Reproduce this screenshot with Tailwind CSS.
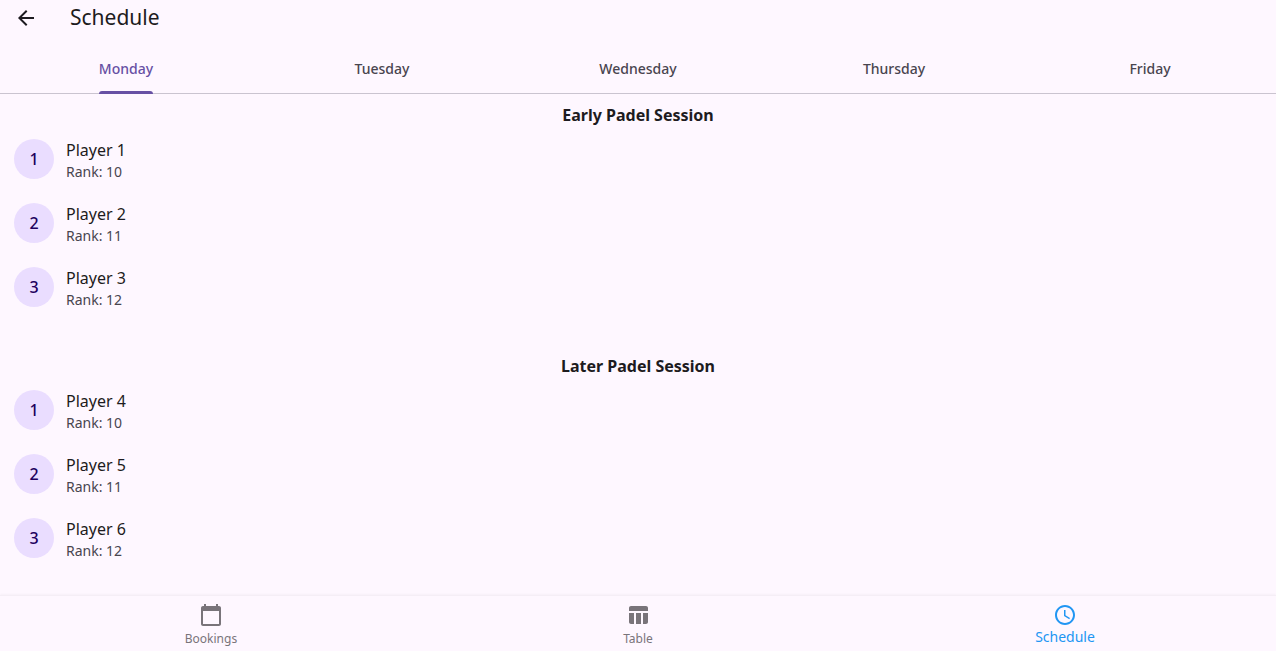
<!DOCTYPE html>
<html lang="en">
<head>
<meta charset="utf-8">
<meta name="viewport" content="width=device-width, initial-scale=1">
<title>Schedule</title>
<script src="https://cdn.jsdelivr.net/npm/@tailwindcss/browser@4"></script>
</head>
<body class="flex min-h-screen flex-col bg-[#fef7ff] font-['Noto_Sans',sans-serif] text-[#1d1b20]">
<header class="flex h-9 items-center gap-6 pl-3.5">
  <button aria-label="Back" class="p-0"><svg class="size-6" viewBox="0 0 24 24" fill="#1d1b20"><path d="M20 11H7.83l5.59-5.59L12 4l-8 8 8 8 1.41-1.41L7.83 13H20v-2z"/></svg></button>
  <h1 class="pb-0.5 pl-2 text-[21px] leading-7">Schedule</h1>
</header>
<nav aria-label="Days" class="mt-2.5 overflow-x-clip border-b border-[#cac4d0] text-sm font-medium text-[#49454f]">
  <div class="-mx-0.5 grid h-[47px] grid-cols-5 justify-items-center">
    <button class="-mb-px flex flex-col items-center text-[#6750a4]"><span class="flex flex-1 items-center">Monday</span><span class="h-[3px] w-full rounded-t-[3px] bg-[#6750a4]"></span></button>
    <button class="pb-0.5">Tuesday</button>
    <button class="pb-0.5">Wednesday</button>
    <button class="pb-0.5">Thursday</button>
    <button class="pb-0.5">Friday</button>
  </div>
</nav>
<main class="flex flex-1 flex-col gap-[35px] pt-[9px]">
  <section>
    <h2 class="text-center text-base font-bold">Early Padel Session</h2>
    <ol>
      <li class="flex h-16 items-center gap-3 px-3.5"><span class="flex size-10 items-center justify-center rounded-full bg-[#eaddff] font-medium text-[#21005d]">1</span><div class="pt-0.5"><p class="text-base leading-6">Player 1</p><p class="text-sm leading-5 text-[#49454f]">Rank: 10</p></div></li>
      <li class="flex h-16 items-center gap-3 px-3.5"><span class="flex size-10 items-center justify-center rounded-full bg-[#eaddff] font-medium text-[#21005d]">2</span><div class="pt-0.5"><p class="text-base leading-6">Player 2</p><p class="text-sm leading-5 text-[#49454f]">Rank: 11</p></div></li>
      <li class="flex h-16 items-center gap-3 px-3.5"><span class="flex size-10 items-center justify-center rounded-full bg-[#eaddff] font-medium text-[#21005d]">3</span><div class="pt-0.5"><p class="text-base leading-6">Player 3</p><p class="text-sm leading-5 text-[#49454f]">Rank: 12</p></div></li>
    </ol>
  </section>
  <section>
    <h2 class="text-center text-base font-bold">Later Padel Session</h2>
    <ol>
      <li class="flex h-16 items-center gap-3 px-3.5"><span class="flex size-10 items-center justify-center rounded-full bg-[#eaddff] font-medium text-[#21005d]">1</span><div class="pt-0.5"><p class="text-base leading-6">Player 4</p><p class="text-sm leading-5 text-[#49454f]">Rank: 10</p></div></li>
      <li class="flex h-16 items-center gap-3 px-3.5"><span class="flex size-10 items-center justify-center rounded-full bg-[#eaddff] font-medium text-[#21005d]">2</span><div class="pt-0.5"><p class="text-base leading-6">Player 5</p><p class="text-sm leading-5 text-[#49454f]">Rank: 11</p></div></li>
      <li class="flex h-16 items-center gap-3 px-3.5"><span class="flex size-10 items-center justify-center rounded-full bg-[#eaddff] font-medium text-[#21005d]">3</span><div class="pt-0.5"><p class="text-base leading-6">Player 6</p><p class="text-sm leading-5 text-[#49454f]">Rank: 12</p></div></li>
    </ol>
  </section>
</main>
<nav aria-label="Main" class="grid h-14 grid-cols-[42fr_43fr_42fr] border-t border-[#f5eef6] text-xs text-[#79747a] shadow-[0_-1px_2px_rgba(0,0,0,0.03)]">
  <a href="#bookings" class="flex flex-col items-center gap-1 pt-[7px]"><svg class="size-6" viewBox="0 0 24 24" fill="currentColor"><path d="M20 3h-1V1h-2v2H7V1H5v2H4c-1.1 0-2 .9-2 2v16c0 1.1.9 2 2 2h16c1.1 0 2-.9 2-2V5c0-1.1-.9-2-2-2zm0 18H4V8h16v13z"/></svg><span>Bookings</span></a>
  <a href="#table" class="flex flex-col items-center gap-1 pt-[7px]"><svg class="size-6" viewBox="0 0 24 24" fill="currentColor"><path d="M10 10.02h5V21h-5zM17 21h3c1.1 0 2-.9 2-2v-9h-5v11zm3-18H5c-1.1 0-2 .9-2 2v3h19V5c0-1.1-.9-2-2-2zM3 19c0 1.1.9 2 2 2h3V10H3v9z"/></svg><span>Table</span></a>
  <a href="#schedule" aria-current="page" class="flex flex-col items-center pt-[7px] text-sm text-[#2196f3]"><svg class="size-6" viewBox="0 0 24 24" fill="currentColor"><path d="M11.99 2C6.47 2 2 6.48 2 12s4.47 10 9.99 10C17.52 22 22 17.52 22 12S17.52 2 11.99 2zM12 20c-4.42 0-8-3.58-8-8s3.58-8 8-8 8 3.58 8 8-3.58 8-8 8zm.5-13H11v6l5.25 3.15.75-1.23-4.5-2.67z"/></svg><span>Schedule</span></a>
</nav>
</body>
</html>
